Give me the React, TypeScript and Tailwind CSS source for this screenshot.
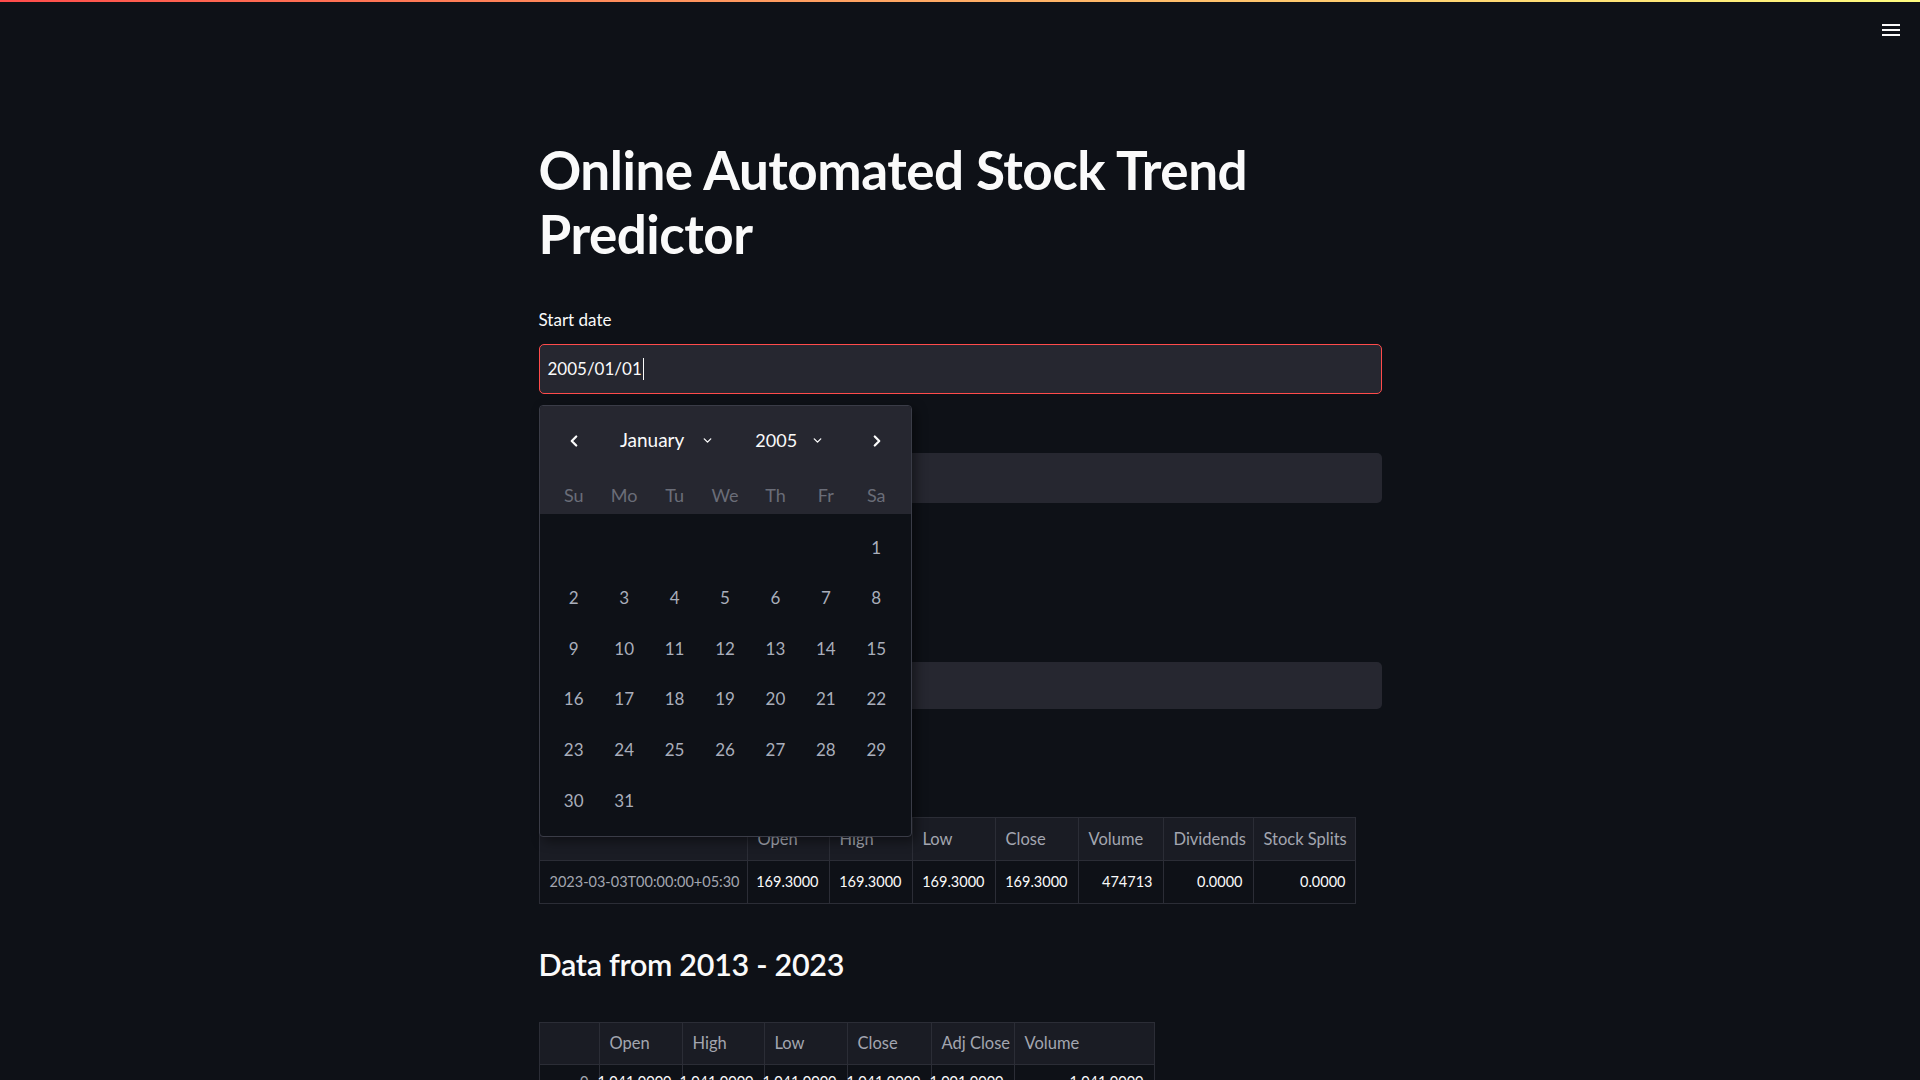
import React from "react";
import { ChevronLeft, ChevronRight, ChevronDown } from "lucide-react";

const weekDays = ["Su", "Mo", "Tu", "We", "Th", "Fr", "Sa"];
// January 2005 starts on a Saturday
const days: (number | null)[] = [
  null, null, null, null, null, null,
  ...Array.from({ length: 31 }, (_, i) => i + 1),
];

const infoHead = ["", "Open", "High", "Low", "Close", "Volume", "Dividends", "Stock Splits"];
const infoRow = ["2023-03-03T00:00:00+05:30", "169.3000", "169.3000", "169.3000", "169.3000", "474713", "0.0000", "0.0000"];

const histHead = ["", "Open", "High", "Low", "Close", "Adj Close", "Volume"];
const histRow = ["0", "1,041.0000", "1,041.0000", "1,041.0000", "1,041.0000", "1,001.0000", "1,041.0000"];

const DatePopup = () => (
  <div className="absolute left-0 top-[61px] z-10 w-[373px] h-[432px] rounded-[4px] border border-[#3a3c47] bg-[#0e1117] shadow-[4px_4px_12px_rgba(0,0,0,0.45)] overflow-hidden">
    {/* month + weekday header */}
    <div className="bg-[#262730]">
      <div className="h-[69px] flex items-center justify-between pl-[25px] pr-[25px] text-[#fafafa]">
        <ChevronLeft size={18} strokeWidth={3} />
        <div className="flex items-center text-[19px] mr-[6px]">
          <span>January</span>
          <ChevronDown size={13} strokeWidth={2.5} className="ml-[17px]" />
          <span className="ml-[41px] text-[18px]">2005</span>
          <ChevronDown size={13} strokeWidth={2.5} className="ml-[14px]" />
        </div>
        <ChevronRight size={18} strokeWidth={3} />
      </div>
      <div className="h-[39px] px-[9px] grid grid-cols-7 items-center text-[18px] text-[#6a6d78]">
        {weekDays.map((d) => (
          <div key={d} className="text-center pt-[2px]">{d}</div>
        ))}
      </div>
    </div>

    {/* days */}
    <div className="px-[9px] pt-[8px] grid grid-cols-7 auto-rows-[50.6px] items-center text-[17px] text-[#a9aebb]">
      {days.map((d, i) => (
        <div key={i} className="text-center">{d ?? ""}</div>
      ))}
    </div>
  </div>
);

const App = () => {
  return (
    <div className="relative min-h-screen h-[1080px] overflow-hidden bg-[#0e1117] text-[#fafafa] font-['Lato',sans-serif]">
      {/* top decoration */}
      <div className="h-[2px] bg-gradient-to-r from-[#ff4b4b] to-[#fffd80]"></div>

      {/* menu button */}
      <button className="absolute top-[24px] right-[20px]">
        <svg width="18" height="12" viewBox="0 0 18 12" fill="#fafafa">
          <rect x="0" y="0" width="18" height="2" />
          <rect x="0" y="5" width="18" height="2" />
          <rect x="0" y="10" width="18" height="2" />
        </svg>
      </button>

      <div className="mx-auto w-[843px] pt-[136px]">
        <h1 className="text-[53px] leading-[64px] font-bold tracking-[-0.5px]">
          Online Automated Stock Trend Predictor
        </h1>

        {/* start date */}
        <label className="block mt-[43px] text-[17px] leading-[22px]">Start date</label>
        <div className="relative mt-[13px]">
          <div className="h-[50px] rounded-[5px] border border-[#ff4b4b] bg-[#262730] pl-[8px] flex items-center text-[17px]">
            <span>2005/01/01</span>
            <span className="ml-[1px] w-[1.5px] h-[22px] bg-[#fafafa]"></span>
          </div>
          <DatePopup />
        </div>

        {/* end date, covered by the popup */}
        <div className="mt-[59px] h-[50px] rounded-[5px] bg-[#262730]"></div>

        {/* ticker input, label covered by the popup */}
        <div className="mt-[159px] h-[47px] rounded-[5px] bg-[#262730]"></div>

        {/* latest info table */}
        <div className="mt-[108px] w-[817px] border border-[#2b2d36]">
          <div className="grid grid-cols-[208px_82px_83px_83px_83px_85px_90px_102px] h-[43px] bg-[#1a1c24] border-b border-[#2b2d36] text-[#a3a6b0] text-[16.5px]">
            {infoHead.map((h, i) => (
              <div key={i} className="flex items-center px-[10px] border-r border-[#2b2d36] last:border-r-0 whitespace-nowrap">
                {h}
              </div>
            ))}
          </div>
          <div className="grid grid-cols-[208px_82px_83px_83px_83px_85px_90px_102px] h-[42px] text-[14.5px]">
            {infoRow.map((v, i) => (
              <div
                key={i}
                className={
                  i === 0
                    ? "flex items-center pl-[10px] border-r border-[#2b2d36] text-[#a3a6b0] whitespace-nowrap"
                    : "flex items-center justify-end px-[10px] border-r border-[#2b2d36] last:border-r-0 whitespace-nowrap"
                }
              >
                {v}
              </div>
            ))}
          </div>
        </div>

        <h3 className="mt-[38px] text-[30.5px] leading-[44px] font-semibold tracking-[-0.3px]">Data from 2013 - 2023</h3>

        {/* history table */}
        <div className="mt-[36px] w-[616px] border border-[#2b2d36]">
          <div className="grid grid-cols-[60px_83px_82px_83px_84px_83px_139px] h-[42px] bg-[#1a1c24] border-b border-[#2b2d36] text-[#a3a6b0] text-[16.5px]">
            {histHead.map((h, i) => (
              <div key={i} className="flex items-center px-[10px] border-r border-[#2b2d36] last:border-r-0 whitespace-nowrap">
                {h}
              </div>
            ))}
          </div>
          <div className="grid grid-cols-[60px_83px_82px_83px_84px_83px_139px] h-[42px] text-[14.5px]">
            {histRow.map((v, i) => (
              <div
                key={i}
                className={
                  i === 0
                    ? "flex items-center justify-end px-[10px] pb-[8px] border-r border-[#2b2d36] text-[#a3a6b0]"
                    : "flex items-center justify-end px-[10px] pb-[8px] border-r border-[#2b2d36] last:border-r-0 whitespace-nowrap"
                }
              >
                {v}
              </div>
            ))}
          </div>
        </div>
      </div>
    </div>
  );
};

export default App;
